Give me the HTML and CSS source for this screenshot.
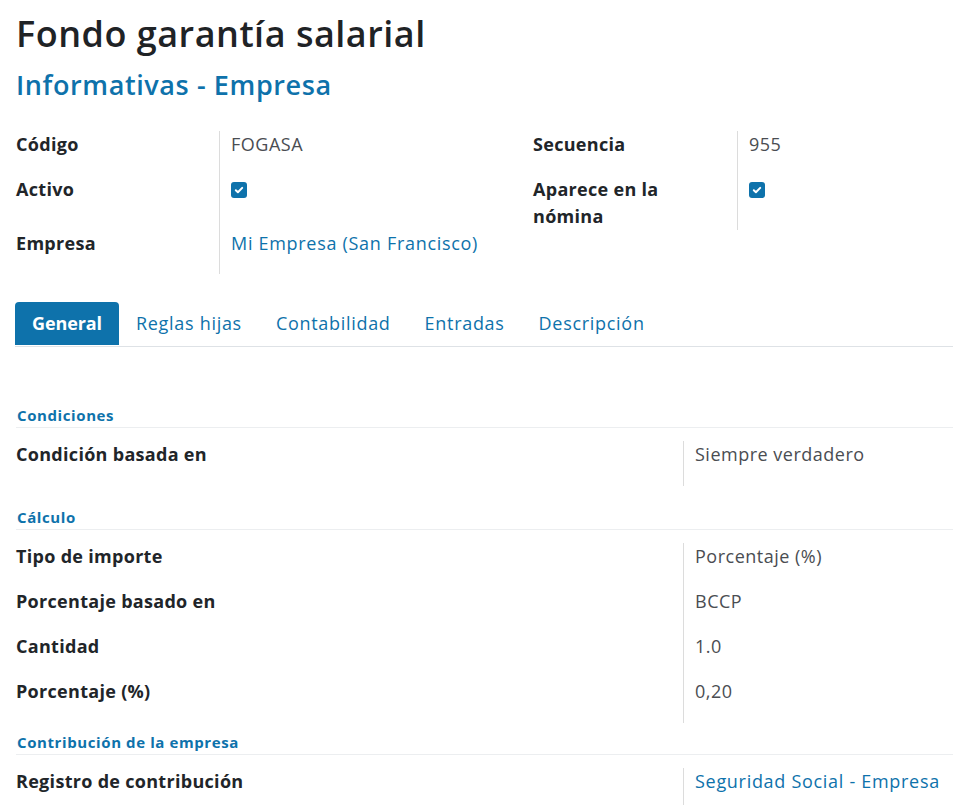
FILE: index.html
```html
<!DOCTYPE html>
<html lang="es">
<head>
<meta charset="utf-8">
<title>Fondo garantía salarial</title>
<link rel="stylesheet" href="styles.css">
</head>
<body>
<div class="sheet">
  <h1 class="title">Fondo garantía salarial</h1>
  <h2 class="subtitle">Informativas - Empresa</h2>

  <div class="top-group">
    <div class="lbl">Código</div>
    <div class="val">FOGASA</div>
    <div class="lbl right">Secuencia</div>
    <div class="val">955</div>

    <div class="lbl">Activo</div>
    <div class="val"><span class="check"><svg viewBox="0 0 16 16" width="16" height="16"><path d="M4.8 8.3l2.1 2 4.3-4.4" fill="none" stroke="#fff" stroke-width="2" stroke-linecap="round" stroke-linejoin="round"/></svg></span></div>
    <div class="lbl right">Aparece en la nómina</div>
    <div class="val"><span class="check"><svg viewBox="0 0 16 16" width="16" height="16"><path d="M4.8 8.3l2.1 2 4.3-4.4" fill="none" stroke="#fff" stroke-width="2" stroke-linecap="round" stroke-linejoin="round"/></svg></span></div>

    <div class="lbl">Empresa</div>
    <div class="val"><a class="link" href="#">Mi Empresa (San Francisco)</a></div>
  </div>

  <ul class="tabs">
    <li class="tab active">General</li>
    <li class="tab">Reglas hijas</li>
    <li class="tab">Contabilidad</li>
    <li class="tab">Entradas</li>
    <li class="tab">Descripción</li>
  </ul>

  <div class="pane">
    <section class="fgroup">
      <div class="ghead">Condiciones</div>
      <div class="grows">
        <div class="glbl">Condición basada en</div>
        <div class="gval">Siempre verdadero</div>
      </div>
    </section>

    <section class="fgroup second">
      <div class="ghead">Cálculo</div>
      <div class="grows">
        <div class="glbl">Tipo de importe</div>
        <div class="gval">Porcentaje (%)</div>
        <div class="glbl">Porcentaje basado en</div>
        <div class="gval">BCCP</div>
        <div class="glbl">Cantidad</div>
        <div class="gval">1.0</div>
        <div class="glbl">Porcentaje (%)</div>
        <div class="gval">0,20</div>
      </div>
    </section>

    <section class="fgroup third">
      <div class="ghead">Contribución de la empresa</div>
      <div class="grows">
        <div class="glbl">Registro de contribución</div>
        <div class="gval"><a class="link" href="#">Seguridad Social - Empresa</a></div>
      </div>
    </section>
  </div>
</div>
</body>
</html>
```

FILE: styles.css
```css
html, body {
  margin: 0;
  padding: 0;
  background: #fff;
  overflow: hidden;
}
body {
  font-family: "Open Sans", "Noto Sans", sans-serif;
  color: #212529;
  width: 953px;
  height: 805px;
}
.sheet {
  padding: 0 0 0 16px;
}
.title {
  margin: 0;
  padding-top: 12px;
  font-size: 36px;
  line-height: 44px;
  font-weight: 600;
  letter-spacing: 0.5px;
  color: #1f2326;
}
.subtitle {
  margin: 0;
  padding-top: 12px;
  font-size: 27px;
  line-height: 34px;
  font-weight: 600;
  letter-spacing: 0.6px;
  color: #0e72ab;
}
.top-group {
  margin-top: 29px;
  display: grid;
  grid-template-columns: 203px 298px 220px 297px;
  grid-template-rows: 45px 54px 44px;
  width: 1018px;
}
.lbl {
  font-size: 18px;
  line-height: 27px;
  font-weight: 700;
  letter-spacing: 0.3px;
  color: #212529;
  padding-right: 24px;
}
.lbl.right {
  margin-left: 16px;
}
.val {
  font-size: 18px;
  line-height: 27px;
  letter-spacing: 0.5px;
  color: #4a4d52;
  border-left: 1px solid #dcdcdc;
  padding-left: 11px;
}
.check {
  display: block;
  width: 16px;
  height: 16px;
  margin-top: 6px;
  border-radius: 3px;
  background: #0e72ab;
}
.check svg { display: block; }
.link {
  color: #0e72ab;
  text-decoration: none;
  letter-spacing: 0.7px;
}

.tabs {
  list-style: none;
  margin: 28px 0 0 -1px;
  padding: 0;
  display: flex;
  border-bottom: 1px solid #dee2e6;
  height: 44px;
  width: 940px;
}
.tab {
  padding: 0 17px;
  height: 43px;
  line-height: 43px;
  font-size: 18px;
  letter-spacing: 0.7px;
  color: #0e72ab;
}
.tab.active {
  background: #0e72ab;
  color: #fff;
  font-weight: 700;
  letter-spacing: -0.1px;
  border-radius: 4px 4px 0 0;
}
.pane {
  padding-top: 58px;
}
.ghead {
  font-size: 15px;
  line-height: 20px;
  font-weight: 700;
  letter-spacing: 0.6px;
  color: #0e72ab;
  padding-left: 1px;
  padding-bottom: 2px;
  border-bottom: 1px solid #eceef0;
  margin-bottom: 13px;
}
.grows {
  display: grid;
  grid-template-columns: 667px 1fr;
}
.glbl {
  font-size: 18px;
  line-height: 27px;
  font-weight: 700;
  letter-spacing: 0.3px;
  color: #212529;
  padding-bottom: 18px;
}
.gval {
  font-size: 18px;
  line-height: 27px;
  letter-spacing: 0.5px;
  color: #4a4d52;
  border-left: 1px solid #dcdcdc;
  padding-left: 11px;
  padding-bottom: 18px;
}
.fgroup.second { margin-top: 21px; }
.fgroup.third { margin-top: 9px; }
```
